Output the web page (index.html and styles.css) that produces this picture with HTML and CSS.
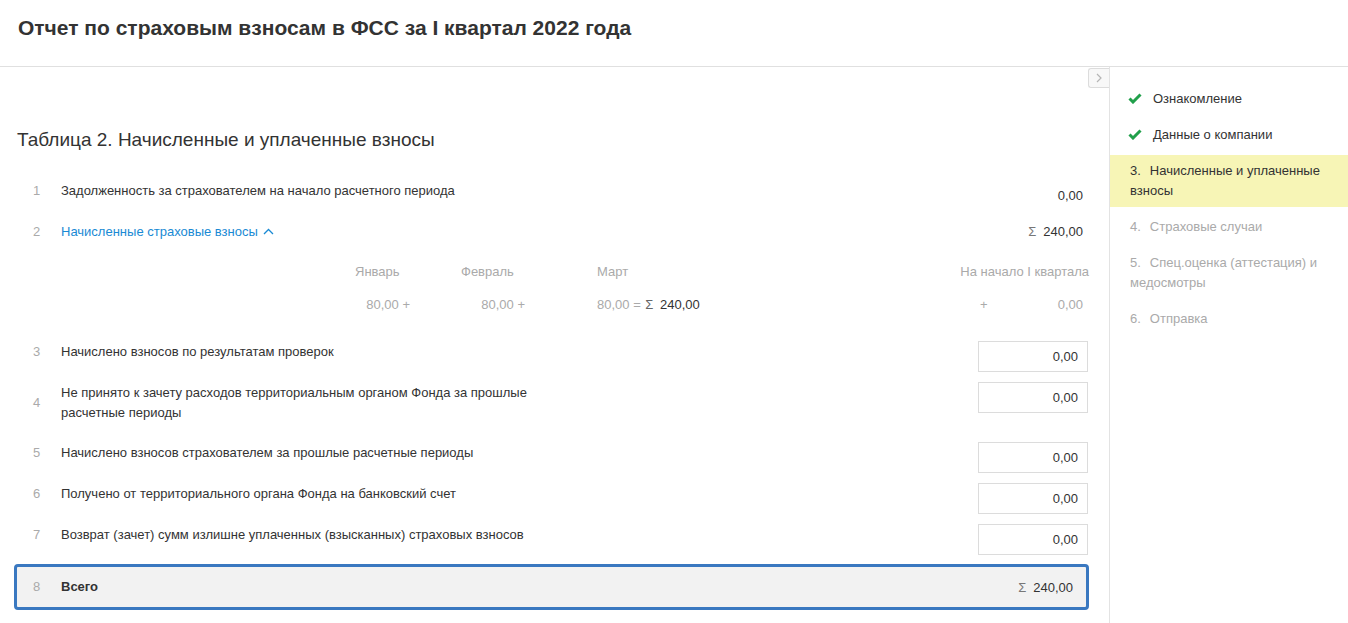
FILE: index.html
```html
<!DOCTYPE html>
<html lang="ru">
<head>
<meta charset="utf-8">
<title>Отчет по страховым взносам в ФСС</title>
<link rel="stylesheet" href="styles.css">
</head>
<body>
<header class="header">
  <h1 class="title">Отчет по страховым взносам в ФСС за I квартал 2022 года</h1>
</header>
<div class="layout">
  <main class="main">
    <button class="toggle" type="button" aria-label="Свернуть">
      <svg width="8" height="10" viewBox="0 0 8 10"><path d="M2 1 L6 5 L2 9" fill="none" stroke="#b5b5b5" stroke-width="1.2"/></svg>
    </button>
    <h2 class="section-title">Таблица 2. Начисленные и уплаченные взносы</h2>
    <div class="rows">
      <div class="row">
        <div class="row-main"><span class="num">1</span><span class="label">Задолженность за страхователем на начало расчетного периода</span></div>
        <div class="val val-tall">0,00</div>
      </div>
      <div class="row row-link">
        <div class="row-main"><span class="num">2</span><span class="label link">Начисленные страховые взносы <svg class="chev" width="11" height="7" viewBox="0 0 11 7"><path d="M1 6 L5.5 1.5 L10 6" fill="none" stroke="#1a8ad4" stroke-width="1.3"/></svg></span></div>
        <div class="val"><span class="sigma">Σ</span>240,00</div>
      </div>
      <div class="breakdown">
        <div class="bd-line bd-head">
          <span class="bd-c1">Январь</span>
          <span class="bd-c2">Февраль</span>
          <span class="bd-c3">Март</span>
          <span class="bd-fill"></span>
          <span class="bd-c4">На начало I квартала</span>
        </div>
        <div class="bd-line bd-vals">
          <span class="bd-c1"><span class="bd-v1">80,00 +</span></span>
          <span class="bd-c2"><span class="bd-v2">80,00 +</span></span>
          <span class="bd-c3">80,00 = <span class="sigma-dark">Σ</span> <span class="dark">240,00</span></span>
          <span class="bd-fill"></span>
          <span class="bd-c4 bd-v4"><span class="plus">+</span><span>0,00</span></span>
        </div>
      </div>
      <div class="row">
        <div class="row-main"><span class="num">3</span><span class="label">Начислено взносов по результатам проверок</span></div>
        <div class="input">0,00</div>
      </div>
      <div class="row row-wide">
        <div class="row-main"><span class="num">4</span><span class="label">Не принято к зачету расходов территориальным органом Фонда за прошлые расчетные периоды</span></div>
        <div class="input">0,00</div>
      </div>
      <div class="row">
        <div class="row-main"><span class="num">5</span><span class="label">Начислено взносов страхователем за прошлые расчетные периоды</span></div>
        <div class="input">0,00</div>
      </div>
      <div class="row">
        <div class="row-main"><span class="num">6</span><span class="label">Получено от территориального органа Фонда на банковский счет</span></div>
        <div class="input">0,00</div>
      </div>
      <div class="row">
        <div class="row-main"><span class="num">7</span><span class="label">Возврат (зачет) сумм излишне уплаченных (взысканных) страховых взносов</span></div>
        <div class="input">0,00</div>
      </div>
      <div class="total">
        <div class="row-main"><span class="num">8</span><span class="label bold">Всего</span></div>
        <div class="total-val"><span class="sigma">Σ</span>240,00</div>
      </div>
    </div>
  </main>
  <aside class="sidebar">
    <ul class="steps">
      <li class="step done"><svg class="check" width="14" height="11" viewBox="0 0 14 11"><path d="M1.5 5.5 L5 9 L12.5 1.5" fill="none" stroke="#21a04b" stroke-width="3"/></svg>Ознакомление</li>
      <li class="step done"><svg class="check" width="14" height="11" viewBox="0 0 14 11"><path d="M1.5 5.5 L5 9 L12.5 1.5" fill="none" stroke="#21a04b" stroke-width="3"/></svg>Данные о компании</li>
      <li class="step active"><span class="step-num">3.</span>Начисленные и уплаченные взносы</li>
      <li class="step todo"><span class="step-num">4.</span>Страховые случаи</li>
      <li class="step todo"><span class="step-num">5.</span>Спец.оценка (аттестация) и медосмотры</li>
      <li class="step todo"><span class="step-num">6.</span>Отправка</li>
    </ul>
  </aside>
</div>
</body>
</html>
```
FILE: styles.css
```css
* { box-sizing: border-box; }
html, body { margin: 0; padding: 0; }
body {
  font-family: "Liberation Sans", Arial, sans-serif;
  font-size: 13px;
  color: #333;
  background: #fff;
  width: 1348px;
  height: 623px;
  overflow: hidden;
}
.header {
  height: 67px;
  border-bottom: 1px solid #e0e0e0;
  padding: 16px 18px 0;
}
.title {
  margin: 0;
  font-size: 21px;
  line-height: 24px;
  font-weight: bold;
  color: #333;
}
.layout {
  display: flex;
  height: 556px;
}
.main {
  position: relative;
  width: 1109px;
  padding: 62px 0 0 14px;
}
.toggle {
  position: absolute;
  top: 1px;
  right: 0;
  width: 21px;
  height: 20px;
  padding: 0;
  border: 1px solid #dcdcdc;
  border-right: none;
  border-radius: 3px 0 0 3px;
  background: #f8f8f8;
  display: flex;
  align-items: center;
  justify-content: center;
}
.section-title {
  margin: 0 0 29px 3px;
  font-size: 19px;
  line-height: 22px;
  font-weight: normal;
  color: #333;
}
.rows {
  width: 1075px;
}
.row {
  display: flex;
  justify-content: space-between;
  align-items: flex-start;
  padding: 0 0 10px 19px;
}
.row-wide { padding-bottom: 19px; }
.row-main {
  display: flex;
  align-items: center;
}
.label, .num { padding-top: 1px; }
.num {
  width: 28px;
  color: #aaa;
  line-height: 20px;
}
.label {
  max-width: 478px;
  line-height: 20px;
}
.link { color: #1a8ad4; }
.chev { margin-left: 2px; vertical-align: 1px; }
.bold { font-weight: bold; }
.val {
  margin-right: 6px;
  line-height: 20px;
  padding-top: 1px;
}
.val-tall { line-height: 31px; padding-top: 0; }
.sigma {
  color: #777;
  margin-right: 7px;
}
.input {
  width: 110px;
  height: 31px;
  margin-right: 1px;
  border: 1px solid #dcdcdc;
  text-align: right;
  padding-right: 9px;
  line-height: 29px;
}
.breakdown {
  padding: 9px 0 26px 341px;
  color: #aaa;
}
.bd-line {
  display: flex;
  line-height: 20px;
  padding-top: 1px;
}
.bd-vals { margin-top: 12px; }
.bd-c1 { width: 106px; }
.bd-c2 { width: 136px; }
.bd-c3 { white-space: nowrap; }
.bd-fill { flex: 1; }
.bd-c4 { width: 129px; text-align: right; white-space: nowrap; }
.bd-v1 { display: inline-block; width: 55px; text-align: right; }
.bd-v2 { display: inline-block; width: 64px; text-align: right; }
.bd-v4 {
  display: flex;
  justify-content: space-between;
  padding: 0 6px 0 20px;
}
.sigma-dark { color: #666; margin-left: 1px; }
.dark { color: #333; margin-left: 3px; }
.total {
  display: flex;
  justify-content: space-between;
  align-items: center;
  height: 46px;
  border: 3px solid #3a78c0;
  border-radius: 4px;
  background: #f2f2f2;
  padding: 0 13px 0 16px;
  margin-top: -1px;
}
.total .label, .total .num { padding-top: 0; }
.sidebar {
  width: 239px;
  border-left: 1px solid #e3e3e3;
  padding-top: 16px;
}
.steps {
  list-style: none;
  margin: 0;
  padding: 0;
}
.step {
  padding: 6px 20px;
  margin-bottom: 4px;
  line-height: 20px;
}
.step.done { padding-left: 18px; color: #333; }
.check { margin-right: 11px; vertical-align: -1px; }
.step.active { background: #f7f5b6; color: #333; }
.step.todo { color: #aaa; }
.step-num { margin-right: 9px; }
```
